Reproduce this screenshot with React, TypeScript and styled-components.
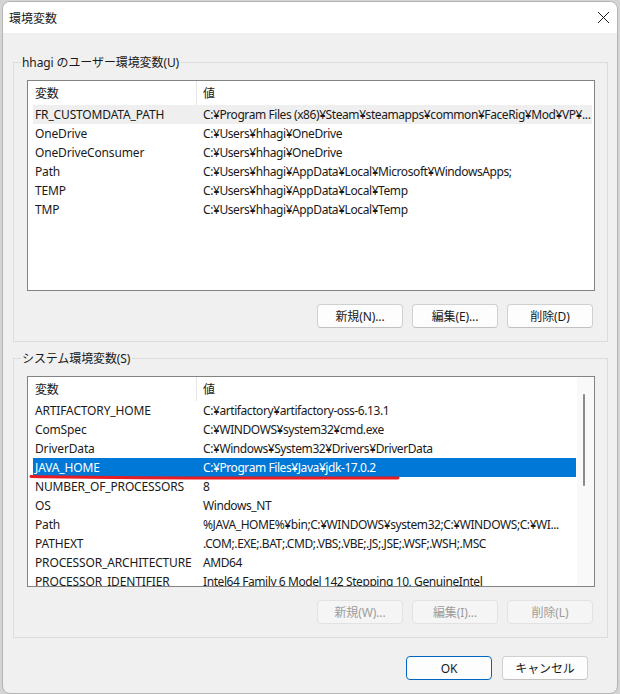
import React from 'react'
import styled, { createGlobalStyle, css } from 'styled-components'

const GlobalStyle = createGlobalStyle`
  body {
    margin: 0;
    background: #d4d4d4;
    font-family: 'Noto Sans', 'Noto Sans CJK JP', sans-serif;
    font-size: 12px;
    color: #1a1a1a;
  }
`

const Frame = styled.div`
  padding: 1px 0 0 2px;
`

const Window = styled.div`
  width: 616px;
  height: 693px;
  box-sizing: border-box;
  border: 1px solid #b4b4b4;
  border-radius: 8px;
  background: #f0f0f0;
  overflow: hidden;
  display: flex;
  flex-direction: column;
`

const TitleBar = styled.div`
  height: 31px;
  flex: none;
  background: #ffffff;
  display: flex;
  align-items: center;
  justify-content: space-between;
  padding: 0 7px 0 6px;
`

const TitleText = styled.span`
  font-size: 12px;
  color: #1a1a1a;
`

const Body = styled.div`
  padding: 29px 9px 0 10px;
  display: flex;
  flex-direction: column;
  gap: 16px;
`

const Group = styled.div`
  position: relative;
  border: 1px solid #dcdcdc;
  padding: 17px 12px 13px 13px;
  display: flex;
  flex-direction: column;
  gap: 13px;
`

const Legend = styled.span`
  position: absolute;
  top: -9px;
  left: 7px;
  padding: 0 2px 0 1px;
  background: #f0f0f0;
  line-height: 17px;
  letter-spacing: -0.1px;
`

const List = styled.div`
  position: relative;
  height: 211px;
  box-sizing: border-box;
  border: 1px solid #838383;
  background: #ffffff;
  display: flex;
  overflow: hidden;
`

const ListContent = styled.div<{ $scroll?: boolean }>`
  flex: 1;
  min-width: 0;
  padding: 0 ${(p) => (p.$scroll ? 1 : 2)}px 0 5px;
  overflow: hidden;
  letter-spacing: -0.15px;
`

const HeaderRow = styled.div`
  display: grid;
  grid-template-columns: 168px 1fr;
  height: 24px;
  align-items: center;
`

const HeaderCell = styled.div<{ $sep?: boolean }>`
  position: relative;
  padding-left: 2px;
  height: 100%;
  display: flex;
  align-items: center;
  ${(p) =>
    p.$sep &&
    css`
      &::after {
        content: '';
        position: absolute;
        right: 4px;
        top: 0;
        bottom: 0;
        width: 1px;
        background: #e5e5e5;
      }
    `}
`

const Row = styled.div<{ $state?: 'hover' | 'selected' }>`
  display: grid;
  grid-template-columns: 168px 1fr;
  height: 19px;
  align-items: center;
  white-space: nowrap;
  background: ${(p) =>
    p.$state === 'selected' ? '#0078d7' : p.$state === 'hover' ? '#efefef' : 'transparent'};
  color: ${(p) => (p.$state === 'selected' ? '#ffffff' : '#1a1a1a')};
`

const Cell = styled.div<{ $value?: boolean }>`
  padding-left: 2px;
  overflow: hidden;
  ${(p) => p.$value && 'letter-spacing: -0.42px;'}
`

const ScrollTrack = styled.div`
  position: relative;
  width: 17px;
  flex: none;
  background: #f9f9f9;
`

const ScrollThumb = styled.div`
  position: absolute;
  left: 6px;
  top: 17px;
  width: 2px;
  height: 92px;
  border-radius: 1px;
  background: #8a8a8a;
`

const Mark = styled.svg`
  position: absolute;
  left: 0;
  top: 0;
  pointer-events: none;
`

const ButtonRow = styled.div`
  display: flex;
  justify-content: flex-end;
  gap: 9px;
  padding-right: 2px;
`

const Button = styled.button<{ $primary?: boolean }>`
  width: 86px;
  height: 24px;
  box-sizing: border-box;
  border: 1px solid ${(p) => (p.$primary ? '#0067c0' : '#d0d0d0')};
  border-bottom-color: ${(p) => (p.$primary ? '#0067c0' : '#c2c2c2')};
  border-radius: 4px;
  background: #fdfdfd;
  font-family: 'Noto Sans', 'Noto Sans CJK JP', sans-serif;
  font-size: 12px;
  letter-spacing: -0.1px;
  color: #1a1a1a;
  padding: 0;
  &:disabled {
    background: #f5f5f5;
    border-color: #e2e2e2;
    color: #9d9d9d;
  }
`

const Footer = styled.div`
  display: flex;
  justify-content: flex-end;
  gap: 10px;
  padding: 18px 29px 0 0;
`

type Var = { name: string; value: string; state?: 'hover' | 'selected' }

const userVars: Var[] = [
  { name: 'FR_CUSTOMDATA_PATH', value: 'C:¥Program Files (x86)¥Steam¥steamapps¥common¥FaceRig¥Mod¥VP¥...', state: 'hover' },
  { name: 'OneDrive', value: 'C:¥Users¥hhagi¥OneDrive' },
  { name: 'OneDriveConsumer', value: 'C:¥Users¥hhagi¥OneDrive' },
  { name: 'Path', value: 'C:¥Users¥hhagi¥AppData¥Local¥Microsoft¥WindowsApps;' },
  { name: 'TEMP', value: 'C:¥Users¥hhagi¥AppData¥Local¥Temp' },
  { name: 'TMP', value: 'C:¥Users¥hhagi¥AppData¥Local¥Temp' },
]

const systemVars: Var[] = [
  { name: 'ARTIFACTORY_HOME', value: 'C:¥artifactory¥artifactory-oss-6.13.1' },
  { name: 'ComSpec', value: 'C:¥WINDOWS¥system32¥cmd.exe' },
  { name: 'DriverData', value: 'C:¥Windows¥System32¥Drivers¥DriverData' },
  { name: 'JAVA_HOME', value: 'C:¥Program Files¥Java¥jdk-17.0.2', state: 'selected' },
  { name: 'NUMBER_OF_PROCESSORS', value: '8' },
  { name: 'OS', value: 'Windows_NT' },
  { name: 'Path', value: '%JAVA_HOME%¥bin;C:¥WINDOWS¥system32;C:¥WINDOWS;C:¥WI...' },
  { name: 'PATHEXT', value: '.COM;.EXE;.BAT;.CMD;.VBS;.VBE;.JS;.JSE;.WSF;.WSH;.MSC' },
  { name: 'PROCESSOR_ARCHITECTURE', value: 'AMD64' },
  { name: 'PROCESSOR_IDENTIFIER', value: 'Intel64 Family 6 Model 142 Stepping 10, GenuineIntel' },
]

function VarList({ vars, scroll }: { vars: Var[]; scroll?: boolean }) {
  return (
    <List>
      <ListContent $scroll={scroll}>
        <HeaderRow>
          <HeaderCell $sep>変数</HeaderCell>
          <HeaderCell>値</HeaderCell>
        </HeaderRow>
        {vars.map((v) => (
          <Row key={v.name + v.value} $state={v.state}>
            <Cell>{v.name}</Cell>
            <Cell $value>{v.value}</Cell>
          </Row>
        ))}
      </ListContent>
      {scroll && (
        <ScrollTrack>
          <ScrollThumb />
        </ScrollTrack>
      )}
      {scroll && (
        <Mark width="567" height="211">
          <path d="M3 99.5 Q 120 101.5 370 101" stroke="#e81c24" strokeWidth="3" fill="none" strokeLinecap="round" />
        </Mark>
      )}
    </List>
  )
}

export default function App() {
  return (
    <Frame>
      <GlobalStyle />
      <Window>
        <TitleBar>
          <TitleText>環境変数</TitleText>
          <svg width="13" height="13" viewBox="0 0 13 13">
            <path d="M1 1 L12 12 M12 1 L1 12" stroke="#1a1a1a" strokeWidth="1" />
          </svg>
        </TitleBar>
        <Body>
          <Group>
            <Legend>hhagi のユーザー環境変数(U)</Legend>
            <VarList vars={userVars} />
            <ButtonRow>
              <Button>新規(N)...</Button>
              <Button>編集(E)...</Button>
              <Button>削除(D)</Button>
            </ButtonRow>
          </Group>
          <Group>
            <Legend>システム環境変数(S)</Legend>
            <VarList vars={systemVars} scroll />
            <ButtonRow>
              <Button disabled>新規(W)...</Button>
              <Button disabled>編集(I)...</Button>
              <Button disabled>削除(L)</Button>
            </ButtonRow>
          </Group>
        </Body>
        <Footer>
          <Button $primary>OK</Button>
          <Button>キャンセル</Button>
        </Footer>
      </Window>
    </Frame>
  )
}
